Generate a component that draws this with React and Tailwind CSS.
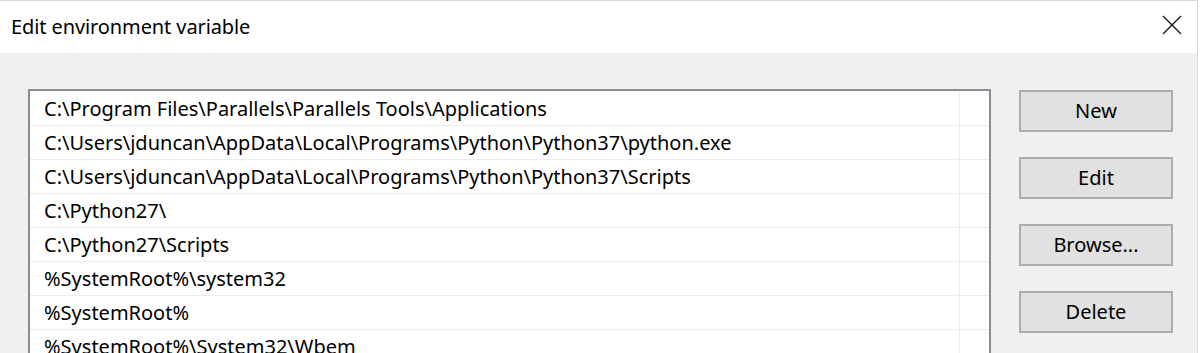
import React from "react";

const rows = [
  "C:\\Program Files\\Parallels\\Parallels Tools\\Applications",
  "C:\\Users\\jduncan\\AppData\\Local\\Programs\\Python\\Python37\\python.exe",
  "C:\\Users\\jduncan\\AppData\\Local\\Programs\\Python\\Python37\\Scripts",
  "C:\\Python27\\",
  "C:\\Python27\\Scripts",
  "%SystemRoot%\\system32",
  "%SystemRoot%",
  "%SystemRoot%\\System32\\Wbem",
];

const buttons = ["New", "Edit", "Browse...", "Delete"];

export default function App() {
  return (
    <div
      className="w-[1200px] h-[353px] overflow-hidden bg-white"
      style={{ fontFamily: '"Noto Sans", "Open Sans", sans-serif' }}
    >
      <div className="w-[1198px] h-[353px] border-t border-r border-[#d9d9d9] flex flex-col text-black">
        <div className="h-[52px] bg-white flex items-center justify-between pl-[11px] pr-[15px] shrink-0">
          <span className="text-[20px] leading-none tracking-[-0.1px]">Edit environment variable</span>
          <svg width="20" height="20" viewBox="0 0 20 20" className="mt-[-4px]">
            <path d="M1 1 L19 19 M19 1 L1 19" stroke="#1a1a1a" strokeWidth="1.4" fill="none" />
          </svg>
        </div>
        <div className="flex-1 bg-[#f0f0f0] flex pl-[28px] pt-[36px]">
          <div className="w-[963px] shrink-0 bg-white border-2 border-[#8a8d94] pt-px self-start">
            {rows.map((r, i) => (
              <div key={i} className="h-[34px] flex border-b border-[#ececec]">
                <div className="w-[929px] pl-[14px] flex items-center text-[20px] leading-none whitespace-nowrap">
                  {r}
                </div>
                <div className="flex-1 border-l border-[#ececec]" />
              </div>
            ))}
          </div>
          <div className="ml-[28px] mt-px flex flex-col gap-[25px]">
            {buttons.map((b) => (
              <div
                key={b}
                className="w-[154px] h-[42px] bg-[#e1e1e1] border-2 border-[#adadad] flex items-center justify-center text-[20px] leading-none"
              >
                {b}
              </div>
            ))}
          </div>
        </div>
      </div>
    </div>
  );
}
